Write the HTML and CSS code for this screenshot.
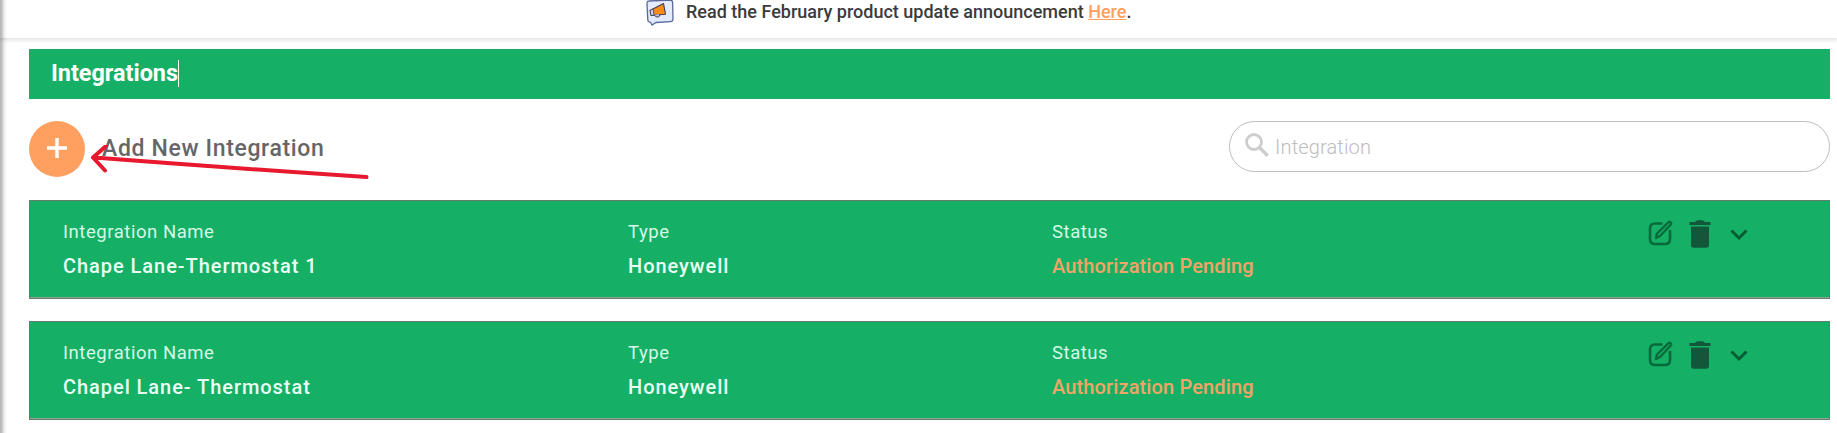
FILE: index.html
```
<!DOCTYPE html>
<html lang="en">
<head>
    <meta charset="utf-8">
    <title>Integrations</title>
    <link rel="stylesheet" href="styles.css">
</head>
<body>
<svg class="icon-defs">
    <symbol id="icon-edit" viewBox="0 0 25 26">
        <path d="M14.500 3.500H7Q2 3.500 2 8.500v10.500q0 5 5 5h10q5 0 5-5v-9" fill="none" stroke="currentColor" stroke-width="2.600"/>
        <path d="M8 18l1-4.500L20.300 2.300q1.200-1 2.300 0t0 2.500L12 16z" fill="none" stroke="currentColor" stroke-width="2.400" stroke-linejoin="round"/>
    </symbol>
    <symbol id="icon-trash" viewBox="0 0 22 28">
        <path d="M.5 2H6q1-1.800 3-1.800h4Q15 .2 16 2h5.500v3H.5zM2 6.500h18V25q0 2.800-2.800 2.800H4.800Q2 27.800 2 25z" fill="currentColor"/>
    </symbol>
    <symbol id="icon-chevron" viewBox="0 0 18 12">
        <path d="M1.500 1.500L9 9l7.500-7.500" fill="none" stroke="currentColor" stroke-width="3"/>
    </symbol>
</svg>
<header class="banner">
    <svg class="banner-icon" viewBox="0 0 28 26">
        <path d="M3 1L24 0q2.500 0 2.600 2.500L27 19q0 2.500-2.500 2.600L10 22.500 6 25l-1.500-2.700Q2 22 1.800 20L1 3.500Q1 1 3 1z" fill="#e3ebfc" stroke="#5a689e" stroke-width="1.300"/>
        <path d="M4 10.500L17.500 3.500l2 10.700L5 15.500z" fill="#f98b16" stroke="#4a3e51" stroke-width="1.100" stroke-linejoin="round"/>
        <path d="M4 10.500l3-1.600 1 6.200-3 .4z" fill="#c8d4f3" stroke="#4a3e51" stroke-width=".8"/>
        <path d="M8.500 15q1 2.500 3.500 2t1.500-2.700" fill="#b8c5ed" stroke="#4a3e51"/>
    </svg>
    <span>Read the February product update announcement <a href="#">Here</a>.</span>
</header>
<main class="content">
    <h1 class="page-title">Integrations</h1>
    <div class="toolbar">
        <button class="add-button" aria-label="Add">
            <svg viewBox="0 0 20 20"><path d="M10 0v20M0 10h20" stroke="#fff" stroke-width="3.400"/></svg>
        </button>
        <span class="add-label">Add New Integration</span>
        <div class="search">
            <svg viewBox="0 0 24 24" fill="none" stroke="currentColor">
                <circle cx="9" cy="9" r="7.500" stroke-width="2.800"/>
                <path d="M14.500 14.500l8.200 8.200" stroke-width="3.400"/>
            </svg>
            <input type="text" placeholder="Integration">
        </div>
        <!-- Hand drawn pointer to the add button -->
        <svg class="pointer" viewBox="0 0 280 40">
            <path d="M304 32Z M275.500 32Q140 23 3 12.500M15 1L2 12.500l12 13" fill="none" stroke="#e8182f" stroke-width="4" stroke-linecap="round" stroke-linejoin="round"/>
        </svg>
    </div>
    <section class="card">
        <div class="field name">
            <div class="label">Integration Name</div>
            <div class="value">Chape Lane-Thermostat 1</div>
        </div>
        <div class="field type">
            <div class="label">Type</div>
            <div class="value">Honeywell</div>
        </div>
        <div class="field status">
            <div class="label">Status</div>
            <div class="value pending">Authorization Pending</div>
        </div>
        <div class="actions">
            <svg class="edit"><use href="#icon-edit"/></svg>
            <svg class="trash"><use href="#icon-trash"/></svg>
            <svg class="chevron"><use href="#icon-chevron"/></svg>
        </div>
    </section>
    <section class="card">
        <div class="field name">
            <div class="label">Integration Name</div>
            <div class="value">Chapel Lane- Thermostat</div>
        </div>
        <div class="field type">
            <div class="label">Type</div>
            <div class="value">Honeywell</div>
        </div>
        <div class="field status">
            <div class="label">Status</div>
            <div class="value pending">Authorization Pending</div>
        </div>
        <div class="actions">
            <svg class="edit"><use href="#icon-edit"/></svg>
            <svg class="trash"><use href="#icon-trash"/></svg>
            <svg class="chevron"><use href="#icon-chevron"/></svg>
        </div>
    </section>
</main>
</body>
</html>
```
FILE: styles.css
```
* {
    box-sizing: border-box;
}

body {
    margin: 0;
    height: 433px;
    overflow: hidden;
    font-family: Roboto, sans-serif;
    /* Shadow cast by the side menu */
    background: linear-gradient(to right, #b4b4b4 0, #c4c4c4 2px, #ececec 4px, #fff 7px);
}

.icon-defs {
    display: none;
}

svg {
    display: block;
    flex: none;
}

.banner {
    display: flex;
    height: 38px;
    padding-left: 646px;
    font-size: 18px;
    font-weight: 500;
    line-height: 24px;
    color: #3b3b3b;
    box-shadow: 0 2px 4px rgba(0, 0, 0, 0.13);
}

.banner-icon {
    width: 28px;
    height: 26px;
    margin-right: 12px;
}

.banner a {
    color: #ff9f60;
}

.content {
    padding: 11px 7px 0 29px;
}

.page-title {
    height: 50px;
    margin: 0;
    padding-left: 22px;
    font-size: 23.4px;
    font-weight: 700;
    line-height: 49px;
    color: #fff;
    background-color: #15b066;
}

/* Text caret */
.page-title::after {
    content: "";
    display: inline-block;
    width: 1px;
    height: 27px;
    background-color: #fff;
    vertical-align: -6px;
}

.toolbar {
    position: relative;
    display: flex;
    align-items: flex-start;
    height: 101px;
    padding-top: 22px;
}

.add-button {
    display: flex;
    align-items: center;
    justify-content: center;
    width: 56px;
    height: 56px;
    padding: 0 0 2px;
    border: none;
    border-radius: 50%;
    background-color: #ff9f60;
}

.add-button svg {
    width: 20px;
    height: 20px;
}

.add-label {
    margin-left: 17px;
    font-size: 23px;
    font-weight: 500;
    line-height: 56px;
    letter-spacing: 0.65px;
    color: #666;
}

.search {
    display: flex;
    align-items: center;
    width: 601px;
    height: 51px;
    margin-left: auto;
    padding-left: 15px;
    border: 1px solid #bdbdbd;
    border-radius: 26px;
    color: #cdcdcd;
}

.search svg {
    width: 24px;
    height: 24px;
    margin-bottom: 3px;
}

.search input {
    flex: 1;
    margin: 0 20px 0 6px;
    padding: 1px 0 0;
    border: none;
    outline: none;
    background: none;
    font: 300 20px Roboto, sans-serif;
    letter-spacing: 0.15px;
}

.search input::placeholder {
    color: #bdbdbd;
}

.pointer {
    position: absolute;
    left: 62px;
    top: 46px;
    width: 280px;
    height: 40px;
}

.card {
    display: flex;
    height: 99px;
    margin-bottom: 22px;
    padding: 17px 0 0 33px;
    border: 1px solid #667a6e;
    background-color: #15b066;
    box-shadow: inset 0 -1px #8ba895;
}

.name {
    width: 565px;
}

.type {
    width: 424px;
}

.status {
    width: 596px;
}

.label {
    font-size: 18.5px;
    line-height: 28px;
    letter-spacing: 0.55px;
    color: #d6f8e5;
}

.value {
    margin-top: 6px;
    font-size: 20px;
    font-weight: 500;
    line-height: 28px;
    letter-spacing: 0.95px;
    color: #e9fff4;
}

.value.pending {
    letter-spacing: 0.13px;
    color: #f0a567;
}

.actions {
    display: flex;
    color: #086a3b;
}

.edit {
    width: 25px;
    height: 26px;
    margin-top: 2px;
}

.trash {
    width: 22px;
    height: 28px;
    margin: 2px 19px 0 16px;
    color: #12573a;
}

.chevron {
    width: 18px;
    height: 12px;
    margin-top: 11px;
    color: #075c34;
}
```
